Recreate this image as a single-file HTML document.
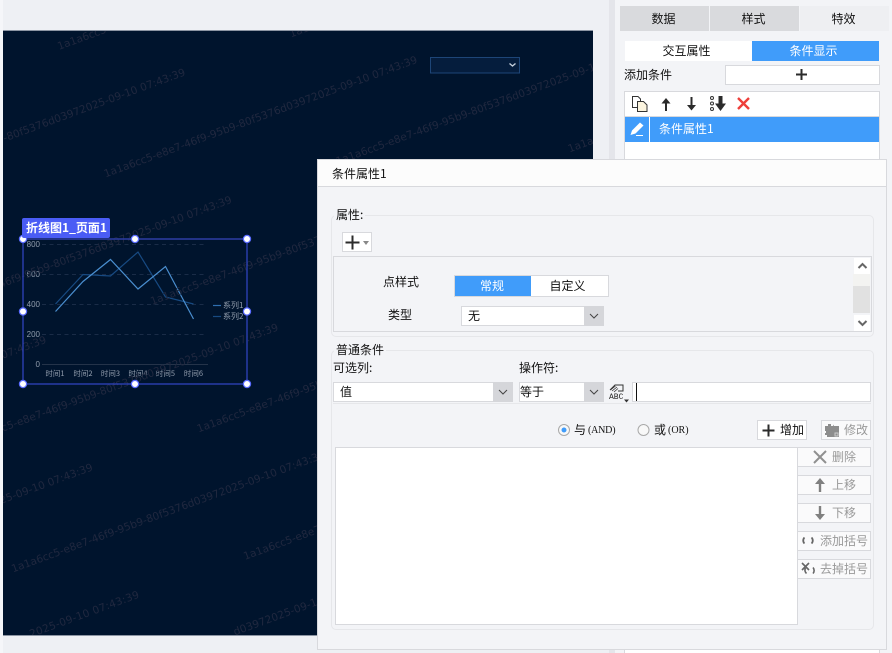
<!DOCTYPE html>
<html lang="zh">
<head>
<meta charset="utf-8">
<title>条件属性</title>
<style>
html,body{margin:0;padding:0;width:892px;height:653px;overflow:hidden;background:#f3f4f7}
body{position:relative;font:12px/20px "WenQuanYi Zen Hei","Noto Sans CJK SC","Liberation Sans",sans-serif;color:#111}
.a{position:absolute;box-sizing:border-box;white-space:nowrap}
.t{text-align:center}
.w{background:#fff;border:1px solid #d8d9dd}
.arr{background:#d5d6da}
.btn{background:#fafafb;border:1px solid #d8d9dd;color:#999;line-height:18px}
svg{position:absolute;overflow:visible}
svg.c{overflow:hidden}
</style>
</head>
<body>
<!-- background strips -->
<div class="a" style="left:3px;top:0;width:606px;height:653px;background:#eef0f4"></div>
<div class="a" style="left:0;top:0;width:3px;height:653px;background:#f5f6f9"></div>
<div class="a" style="left:609px;top:0;width:6px;height:653px;background:#e4e5ea"></div>

<!-- canvas -->
<div class="a" style="left:3px;top:30px;width:590px;height:606px;background:#00142d;border-top:1px solid #8c95a3;border-bottom:1px solid #8c95a3;overflow:hidden">
<svg class="c" style="left:0;top:-1px" width="590" height="606" viewBox="3 30 590 606" font-family="DejaVu Sans, sans-serif">
  <!-- dropdown -->
  <rect x="430.5" y="57.5" width="89" height="15.5" fill="#051d3d" stroke="#1d4577"/>
  <path d="M509.5 63.5l3 2.5 3-2.5" fill="none" stroke="#c6d0dc" stroke-width="1.4"/>
  <!-- grid -->
  <g stroke="#1a2c47" stroke-width="1" stroke-dasharray="4 3.5" fill="none">
    <path d="M42 244.500H207M42 274.500H207M42 304.500H207M42 334.500H207"/>
  </g>
  <path d="M42 364.500H208" stroke="#243349"/>
  <g fill="#8f9bab" font-size="8" text-anchor="end" font-family="Liberation Sans, sans-serif">
    <text x="40" y="247">800</text><text x="40" y="277">600</text><text x="40" y="307">400</text><text x="40" y="337">200</text><text x="40" y="367">0</text>
  </g>
  <g fill="#8f9bab" font-size="7.5" text-anchor="middle" font-family="WenQuanYi Zen Hei, Noto Sans CJK SC, sans-serif">
    <text x="55" y="376">时间1</text><text x="83" y="376">时间2</text><text x="110.5" y="376">时间3</text><text x="138" y="376">时间4</text><text x="165.5" y="376">时间5</text><text x="193.5" y="376">时间6</text>
  </g>
  <polyline points="55.5,304 83,274.5 110.5,276 138,252 165.5,297 193.5,304" fill="none" stroke="#174a82" stroke-width="1.2"/>
  <polyline points="55.5,311.5 83,281.5 110.5,259.5 138,289 165.5,266.5 193.5,319" fill="none" stroke="#4a8fd0" stroke-width="1.2"/>
  <path d="M213 305.500h8" stroke="#2f6fb0" stroke-width="1.2"/>
  <path d="M213 316.500h8" stroke="#174a82" stroke-width="1.2"/>
  <g fill="#8f9bab" font-size="8" font-family="WenQuanYi Zen Hei, Noto Sans CJK SC, sans-serif">
    <text x="223" y="308">系列1</text><text x="223" y="319">系列2</text>
  </g>
  <!-- watermarks -->
  <g fill="#20283f" font-size="10.5">
    <text transform="translate(59 50) rotate(-20.2)" textLength="333">1a1a6cc5-e8e7-46f9-95b9-80f5376d03972025-09-10 07:43:39</text>
    <text transform="translate(291 37.5) rotate(-20.2)" textLength="333">1a1a6cc5-e8e7-46f9-95b9-80f5376d03972025-09-10 07:43:39</text>
    <text transform="translate(-126.5 190) rotate(-20.2)" textLength="333">1a1a6cc5-e8e7-46f9-95b9-80f5376d03972025-09-10 07:43:39</text>
    <text transform="translate(105.5 177.5) rotate(-20.2)" textLength="333">1a1a6cc5-e8e7-46f9-95b9-80f5376d03972025-09-10 07:43:39</text>
    <text transform="translate(337.5 165) rotate(-20.2)" textLength="333">1a1a6cc5-e8e7-46f9-95b9-80f5376d03972025-09-10 07:43:39</text>
    <text transform="translate(569.5 152.5) rotate(-20.2)" textLength="333">1a1a6cc5-e8e7-46f9-95b9-80f5376d03972025-09-10 07:43:39</text>
    <text transform="translate(-312 330) rotate(-20.2)" textLength="333">1a1a6cc5-e8e7-46f9-95b9-80f5376d03972025-09-10 07:43:39</text>
    <text transform="translate(-80 317.5) rotate(-20.2)" textLength="333">1a1a6cc5-e8e7-46f9-95b9-80f5376d03972025-09-10 07:43:39</text>
    <text transform="translate(152 305) rotate(-20.2)" textLength="333">1a1a6cc5-e8e7-46f9-95b9-80f5376d03972025-09-10 07:43:39</text>
    <text transform="translate(-265.5 457.5) rotate(-20.2)" textLength="333">1a1a6cc5-e8e7-46f9-95b9-80f5376d03972025-09-10 07:43:39</text>
    <text transform="translate(-33.5 445) rotate(-20.2)" textLength="333">1a1a6cc5-e8e7-46f9-95b9-80f5376d03972025-09-10 07:43:39</text>
    <text transform="translate(198.5 432.5) rotate(-20.2)" textLength="333">1a1a6cc5-e8e7-46f9-95b9-80f5376d03972025-09-10 07:43:39</text>
    <text transform="translate(-219 585) rotate(-20.2)" textLength="333">1a1a6cc5-e8e7-46f9-95b9-80f5376d03972025-09-10 07:43:39</text>
    <text transform="translate(13 572.5) rotate(-20.2)" textLength="333">1a1a6cc5-e8e7-46f9-95b9-80f5376d03972025-09-10 07:43:39</text>
    <text transform="translate(245 560) rotate(-20.2)" textLength="333">1a1a6cc5-e8e7-46f9-95b9-80f5376d03972025-09-10 07:43:39</text>
    <text transform="translate(31 637.5) rotate(-20.2)" textLength="116">2025-09-10 07:43:39</text>
    <text transform="translate(235 635.5) rotate(-20.2)" textLength="146">d03972025-09-10 07:43:39</text>
  </g>
  <!-- selection -->
  <rect x="23" y="239" width="224" height="145" fill="none" stroke="#3346c8" stroke-width="1.2"/>
  <path d="M23 239H247" stroke="#2a3a9a" stroke-width="1.4"/>
  <g fill="#fff" stroke="#5a6cff" stroke-width="1.2">
    <circle cx="23" cy="239" r="3.6"/><circle cx="135" cy="239" r="3.6"/><circle cx="247" cy="239" r="3.6"/>
    <circle cx="23" cy="311.5" r="3.6"/><circle cx="247" cy="311.5" r="3.6"/>
    <circle cx="23" cy="384" r="3.6"/><circle cx="135" cy="384" r="3.6"/><circle cx="247" cy="384" r="3.6"/>
  </g>
</svg>
</div>
<div class="a" style="left:22px;top:218px;width:88px;height:20px;background:#4a5cf5;border-radius:2px;color:#fff;font:bold 12px/20px 'Noto Sans CJK SC','Liberation Sans',sans-serif;padding-left:4px">折线图1_页面1</div>

<!-- right panel -->
<div class="a t" style="left:620px;top:6px;width:87px;height:25px;line-height:25px;background:#d9dadd;box-shadow:2px 0 0 #d9dadd">数据</div>
<div class="a t" style="left:710px;top:6px;width:87px;height:25px;line-height:25px;background:#d9dadd;box-shadow:2px 0 0 #d9dadd">样式</div>
<div class="a t" style="left:800px;top:6px;width:87px;height:25px;line-height:25px;background:#eeeff2;box-shadow:2px 0 0 #eeeff2">特效</div>
<div class="a t" style="left:625px;top:41px;width:127px;height:20px;background:#fff;padding-right:4px">交互属性</div>
<div class="a t" style="left:752px;top:41px;width:127px;height:20px;background:#409cfa;color:#fff;padding-right:4px">条件显示</div>
<div class="a" style="left:624px;top:65px">添加条件</div>
<div class="a w" style="left:725px;top:65px;width:155px;height:20px"></div>
<svg style="left:795px;top:68px" width="13" height="13"><path d="M6.500 1v11M1 6.500h11" stroke="#2b2b2b" stroke-width="2"/></svg>
<div class="a w" style="left:624px;top:91px;width:256px;height:562px;border-bottom:0"></div>
<div class="a" style="left:625px;top:116px;width:254px;height:1px;background:#d8d9dd"></div>
<div class="a" style="left:625px;top:117px;width:254px;height:25px;background:#409cfa"></div>
<div class="a" style="left:649px;top:117px;width:1px;height:25px;background:#fff"></div>
<div class="a" style="left:659px;top:119px;color:#fff">条件属性1</div>
<!-- toolbar icons -->
<svg style="left:630px;top:94px" width="122" height="20">
  <path d="M2.500 2.500h5.500l2.500 2.500v8.500h-8z" fill="#fff" stroke="#333"/>
  <path d="M7.500 7.500h6l3.500 3.500v6.500h-9.500z" fill="#fbf4de" stroke="#333"/>
  <path d="M36 17V8" stroke="#2b2b2b" stroke-width="2"/><path d="M31.500 9.500L36 4l4.500 5.500z" fill="#2b2b2b"/>
  <path d="M61.500 3v9" stroke="#2b2b2b" stroke-width="2"/><path d="M57 11h9l-4.500 5.500z" fill="#2b2b2b"/>
  <circle cx="82" cy="4" r="1.500" fill="none" stroke="#333"/><circle cx="82" cy="9.500" r="1.500" fill="none" stroke="#333"/><circle cx="82" cy="15" r="1.500" fill="none" stroke="#333"/>
  <path d="M90.500 2v8" stroke="#2b2b2b" stroke-width="4"/><path d="M85 9.500h11l-5.500 7.500z" fill="#2b2b2b"/>
  <path d="M108 4l11 11M119 4l-11 11" stroke="#ee3f3b" stroke-width="2.400"/>
</svg>
<svg style="left:629px;top:121px" width="18" height="17">
  <path d="M1.500 14L3 9.500 11 1.500l3.500 3-8 8z" fill="#fff"/><path d="M7 14.500h7" stroke="#fff"/>
</svg>

<!-- dialog -->
<div class="a" style="left:317px;top:159px;width:570px;height:491px;background:#f3f4f7;border:1px solid #d8d9dd"></div>
<div class="a" style="left:318px;top:160px;width:568px;height:27px;background:#fcfcfc;border-bottom:1px solid #d8d9dd;padding-left:14px;line-height:27px">条件属性1</div>

<!-- group 1 -->
<div class="a" style="left:331px;top:215px;width:543px;height:122px;border:1px solid #e6e7ea;border-radius:5px"></div>
<div class="a" style="left:334px;top:205px;background:#f3f4f7;padding:0 2px">属性:</div>
<div class="a w" style="left:342px;top:232px;width:30px;height:20px"></div>
<svg style="left:345px;top:235px" width="25" height="15"><path d="M7.500 .5v14M.5 7.500h14" stroke="#2b2b2b" stroke-width="2"/><path d="M18 6h6l-3 4z" fill="#888"/></svg>
<div class="a" style="left:333px;top:256px;width:539px;height:76px;border:1px solid #d8d9dd"></div>
<div class="a" style="left:383px;top:272px">点样式</div>
<div class="a w" style="left:454px;top:275px;width:155px;height:22px"></div>
<div class="a t" style="left:455px;top:276px;width:76px;height:20px;background:#409cfa;color:#fff;padding-right:2px">常规</div>
<div class="a t" style="left:531px;top:276px;width:77px;height:20px;padding-right:4px">自定义</div>
<div class="a" style="left:388px;top:305px">类型</div>
<div class="a w" style="left:461px;top:306px;width:143px;height:20px;line-height:18px;padding-left:6px">无</div>
<div class="a arr" style="left:584px;top:306px;width:20px;height:20px"></div>
<svg style="left:589px;top:313px" width="10" height="7"><path d="M1 1l4 4 4-4" fill="none" stroke="#444"/></svg>
<!-- scrollbar -->
<div class="a" style="left:854px;top:258px;width:16px;height:16px;background:#fff"></div>
<div class="a" style="left:853px;top:274px;width:17px;height:12px;background:#f3f3f1"></div>
<div class="a" style="left:853px;top:286px;width:17px;height:27px;background:#e1e1e1"></div>
<div class="a" style="left:854px;top:315px;width:16px;height:16px;background:#fff"></div>
<svg style="left:857px;top:262px" width="11" height="8"><path d="M1.500 6L5.500 2l4 4" fill="none" stroke="#666" stroke-width="2"/></svg>
<svg style="left:857px;top:319px" width="11" height="8"><path d="M1.500 2L5.500 6l4-4" fill="none" stroke="#666" stroke-width="2"/></svg>

<!-- group 2 -->
<div class="a" style="left:331px;top:350px;width:543px;height:280px;border:1px solid #e6e7ea;border-radius:5px"></div>
<div class="a" style="left:334px;top:340px;background:#f3f4f7;padding:0 2px">普通条件</div>
<div class="a" style="left:333px;top:358px">可选列:</div>
<div class="a" style="left:519px;top:358px">操作符:</div>
<div class="a w" style="left:333px;top:382px;width:180px;height:20px;line-height:18px;padding-left:6px">值</div>
<div class="a arr" style="left:493px;top:382px;width:20px;height:20px"></div>
<svg style="left:498px;top:389px" width="10" height="7"><path d="M1 1l4 4 4-4" fill="none" stroke="#444"/></svg>
<div class="a w" style="left:519px;top:382px;width:85px;height:20px;line-height:18px;padding-left:0">等于</div>
<div class="a arr" style="left:584px;top:382px;width:20px;height:20px"></div>
<svg style="left:589px;top:389px" width="10" height="7"><path d="M1 1l4 4 4-4" fill="none" stroke="#444"/></svg>
<svg style="left:609px;top:381px" width="22" height="22">
  <path d="M1 9l5-5h8v6H9" fill="none" stroke="#333"/><path d="M1.500 9l5-4M3 10l5-4M5 11l4-3.500" stroke="#333" stroke-width=".8"/>
  <text x="0" y="18" font-family="Liberation Mono,monospace" font-size="8" fill="#222">ABC</text>
  <path d="M15 18.500h5l-2.500 3z" fill="#333"/>
</svg>
<div class="a w" style="left:632px;top:382px;width:239px;height:20px"></div>
<div class="a" style="left:636px;top:383px;width:1px;height:18px;background:#111"></div>
<div class="a" style="left:333px;top:403px;width:538px;height:1px;background:#e6e7ea"></div>

<!-- radios -->
<svg style="left:557px;top:423px" width="14" height="14"><circle cx="7" cy="7" r="5.500" fill="#f8f8f8" stroke="#a9a9a9"/><circle cx="7" cy="7" r="2.500" fill="#409cfa"/></svg>
<div class="a" style="left:574px;top:420px">与</div>
<div class="a" style="left:588px;top:421px;font:10px/20px 'Liberation Serif',serif;letter-spacing:-.2px">(AND)</div>
<svg style="left:637px;top:423px" width="14" height="14"><circle cx="6.500" cy="7" r="5.500" fill="#f8f8f8" stroke="#a9a9a9"/></svg>
<div class="a" style="left:654px;top:420px">或</div>
<div class="a" style="left:668px;top:421px;font:10px/20px 'Liberation Serif',serif">(OR)</div>

<div class="a w" style="left:757px;top:420px;width:50px;height:20px;line-height:18px;padding-left:22px;color:#111">增加</div>
<svg style="left:762px;top:424px" width="13" height="13"><path d="M6.500 .5v12M.5 6.500h12" stroke="#2b2b2b" stroke-width="2"/></svg>
<div class="a btn" style="left:821px;top:420px;width:50px;height:20px;padding-left:22px">修改</div>
<svg style="left:824px;top:423px" width="16" height="14"><path d="M1 3h3V1h3v2h2V1.500L10 3h5v11H3v-2H1v-2h1V8H1z" fill="#8d8d8d"/><rect x="11" y="10" width="3" height="3" fill="none" stroke="#ccc"/></svg>

<div class="a w" style="left:335px;top:447px;width:463px;height:178px"></div>

<div class="a btn" style="left:797px;top:447px;width:74px;height:20px;padding-left:34px">删除</div>
<svg style="left:813px;top:450px" width="14" height="14"><path d="M1 1l12 12M13 1L1 13" stroke="#909090" stroke-width="2"/></svg>
<div class="a btn" style="left:797px;top:475px;width:74px;height:20px;padding-left:34px">上移</div>
<svg style="left:814px;top:477px" width="12" height="16"><path d="M6 15V5" stroke="#808080" stroke-width="2.400"/><path d="M1 7l5-6 5 6z" fill="#808080"/></svg>
<div class="a btn" style="left:797px;top:503px;width:74px;height:20px;padding-left:34px">下移</div>
<svg style="left:814px;top:505px" width="12" height="16"><path d="M6 1v10" stroke="#808080" stroke-width="2.400"/><path d="M1 9l5 6 5-6z" fill="#808080"/></svg>
<div class="a btn" style="left:797px;top:531px;width:74px;height:20px;padding-left:22px">添加括号</div>
<svg style="left:801px;top:535px" width="16" height="12"><path d="M3.500 2.500C1.800 4 1.800 7 3.500 8.500M10.500 2.500c1.700 1.500 1.700 4.500 0 6" fill="none" stroke="#666" stroke-width="1.800"/></svg>
<div class="a btn" style="left:797px;top:559px;width:74px;height:20px;padding-left:22px">去掉括号</div>
<svg style="left:800px;top:561px" width="17" height="16"><path d="M2 2l7 7M9 2L2 9" stroke="#666" stroke-width="1.600"/><path d="M5.500 7C4.500 9 5 11 6.500 12.500M13 6.500c1.500 1.700 1.500 4.300 0 6" fill="none" stroke="#666" stroke-width="1.600"/></svg>
</body>
</html>
